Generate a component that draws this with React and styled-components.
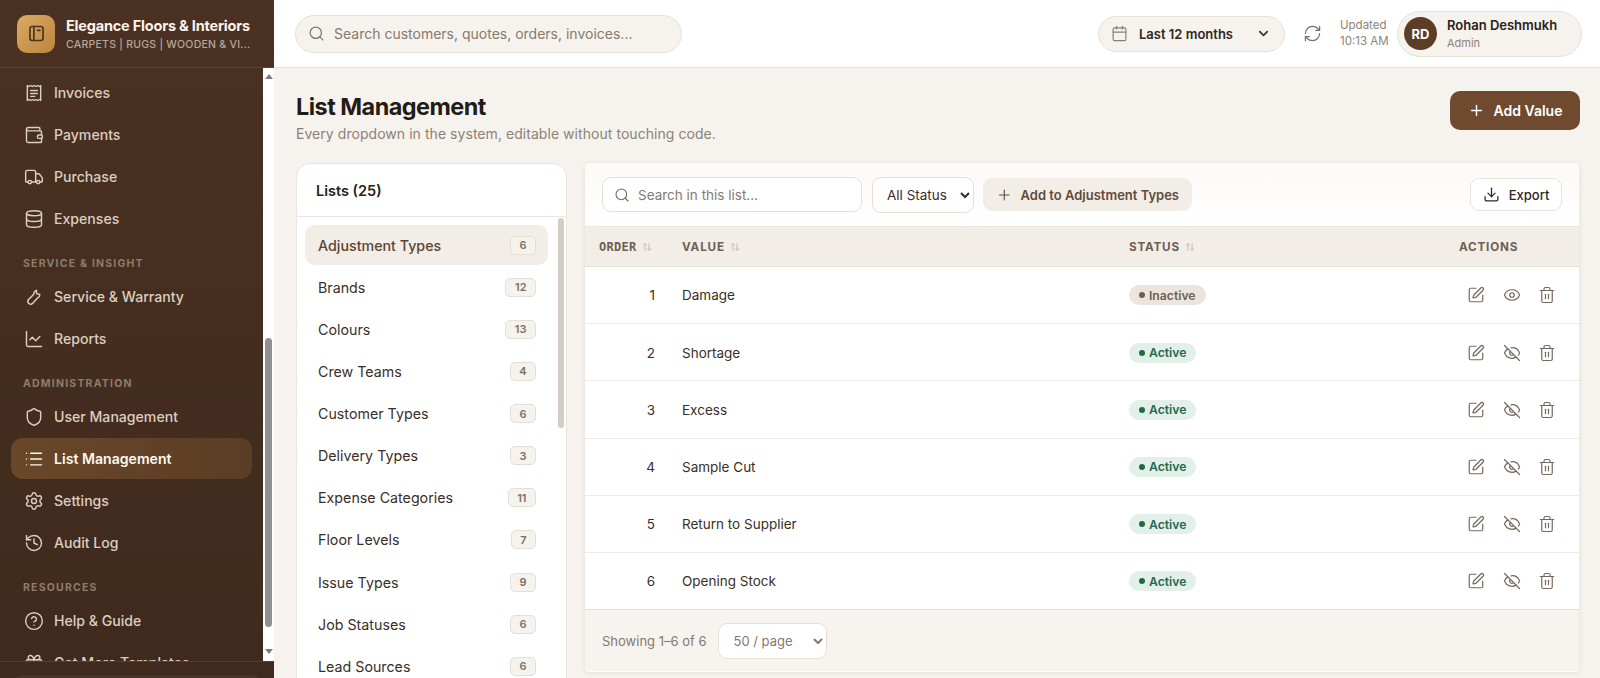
import React from 'react';
import styled, { createGlobalStyle } from 'styled-components';
import {
  Wallet, Truck, Database, ChartLine, Shield, List, Settings, History,
  CircleHelp, Gift, Search, Calendar, ChevronDown, RefreshCw, Plus, Download, SquarePen, Eye,
  EyeOff, Trash2, ArrowUpDown,
} from 'lucide-react';

const GlobalStyle = createGlobalStyle`
  html, body { margin: 0; padding: 0; height: 100%; overflow: hidden; }
  body { font-family: Inter, "Liberation Sans", sans-serif; background: #f6f3ee; color: #2a211b; }
  * { box-sizing: border-box; }
`;

const Glyph = ({ size = 20, strokeWidth = 1.7, children }) => (
  <svg
    width={size}
    height={size}
    viewBox="0 0 24 24"
    fill="none"
    stroke="currentColor"
    strokeWidth={strokeWidth}
    strokeLinecap="round"
    strokeLinejoin="round"
  >
    {children}
  </svg>
);

const InvoiceIcon = (props) => (
  <Glyph {...props}>
    <path d="M4 3l2 1.2L8 3l2 1.2L12 3l2 1.2L16 3l2 1.2L20 3v18l-2-1.2-2 1.2-2-1.2-2 1.2-2-1.2-2 1.2-2-1.2-2 1.2z" />
    <path d="M8 9h8M8 12.5h8M8 16h5" />
  </Glyph>
);

const ToolIcon = (props) => (
  <Glyph {...props}>
    <path d="M15 4v4l4 1c0 2-1 3.5-2.5 4l-6 6.5a3 3 0 0 1-5-4.500l6-6c0-2 1-4 3.500-5z" />
  </Glyph>
);

const BookIcon = (props) => (
  <Glyph {...props}>
    <rect x="4.500" y="4" width="15" height="16" rx="2.500" />
    <path d="M9 4v16M13 8.500h3" />
  </Glyph>
);

const navGroups = [
  { items: [[InvoiceIcon, 'Invoices'], [Wallet, 'Payments'], [Truck, 'Purchase'], [Database, 'Expenses']] },
  { title: 'SERVICE & INSIGHT', items: [[ToolIcon, 'Service & Warranty'], [ChartLine, 'Reports']] },
  { title: 'ADMINISTRATION', items: [[Shield, 'User Management'], [List, 'List Management'], [Settings, 'Settings'], [History, 'Audit Log']] },
  { title: 'RESOURCES', items: [[CircleHelp, 'Help & Guide'], [Gift, 'Get More Templates']] },
];

const lists = [
  ['Adjustment Types', 6], ['Brands', 12], ['Colours', 13], ['Crew Teams', 4], ['Customer Types', 6],
  ['Delivery Types', 3], ['Expense Categories', 11], ['Floor Levels', 7], ['Issue Types', 9],
  ['Job Statuses', 6], ['Lead Sources', 6],
];

const rows = [
  [1, 'Damage', false], [2, 'Shortage', true], [3, 'Excess', true],
  [4, 'Sample Cut', true], [5, 'Return to Supplier', true], [6, 'Opening Stock', true],
];

export default function App() {
  return (
    <Shell>
      <GlobalStyle />
      <Sidebar>
        <Brand>
          <LogoMark><BookIcon size={21} strokeWidth={1.9} /></LogoMark>
          <div>
            <BrandName>Elegance Floors &amp; Interiors</BrandName>
            <BrandTag>CARPETS | RUGS | WOODEN &amp; VI...</BrandTag>
          </div>
        </Brand>
        <NavArea>
          <NavList>
            {navGroups.map((group, i) => (
              <div key={i}>
                {group.title && <NavTitle>{group.title}</NavTitle>}
                {group.items.map(([Icon, label]) => (
                  <NavItem key={label} $active={label === 'List Management'}>
                    <Icon size={20} strokeWidth={1.7} />
                    {label}
                  </NavItem>
                ))}
              </div>
            ))}
          </NavList>
          <ScrollTrack>
            <ScrollArrow $up />
            <ScrollThumb />
            <ScrollArrow />
          </ScrollTrack>
        </NavArea>
        <SideFooter><FooterCard /></SideFooter>
      </Sidebar>

      <Main>
        <Topbar>
          <GlobalSearch>
            <Search size={17} strokeWidth={1.7} color="#7d7268" />
            <input placeholder="Search customers, quotes, orders, invoices..." />
          </GlobalSearch>
          <TopRight>
            <DatePill>
              <Calendar size={17} strokeWidth={1.6} color="#8a7d71" />
              <span>Last 12 months</span>
              <ChevronDown size={15} strokeWidth={2.6} color="#3a2e26" />
            </DatePill>
            <Refresh><RefreshCw size={19} strokeWidth={1.5} /></Refresh>
            <Updated>Updated<br />10:13 AM</Updated>
            <UserPill>
              <Avatar>RD</Avatar>
              <UserText>
                <UserName>Rohan Deshmukh</UserName>
                <UserRole>Admin</UserRole>
              </UserText>
            </UserPill>
          </TopRight>
        </Topbar>

        <Content>
          <PageHead>
            <div>
              <PageTitle>List Management</PageTitle>
              <PageSub>Every dropdown in the system, editable without touching code.</PageSub>
            </div>
            <AddButton><Plus size={17} strokeWidth={2} />Add Value</AddButton>
          </PageHead>

          <Columns>
            <ListsCard>
              <ListsHead>Lists (25)</ListsHead>
              <ListsBody>
                <ListsScroll>
                  {lists.map(([name, count], i) => (
                    <ListRow key={name} $active={i === 0}>
                      {name}
                      <Count>{count}</Count>
                    </ListRow>
                  ))}
                </ListsScroll>
                <ListsThumb />
              </ListsBody>
            </ListsCard>

            <TableCard>
              <Toolbar>
                <FilterSearch>
                  <Search size={16} strokeWidth={1.6} color="#6f655c" />
                  <input placeholder="Search in this list..." />
                </FilterSearch>
                <StatusSelect defaultValue="all">
                  <option value="all">All Status</option>
                </StatusSelect>
                <AddTo><Plus size={18} strokeWidth={1.6} />Add to Adjustment Types</AddTo>
                <ExportButton><Download size={17} strokeWidth={1.8} />Export</ExportButton>
              </Toolbar>

              <HeadRow>
                <OrderHead>ORDER <SortIcon size={10} /></OrderHead>
                <HeadCell>VALUE <SortIcon size={10} /></HeadCell>
                <HeadCell>STATUS <SortIcon size={10} /></HeadCell>
                <HeadCell>ACTIONS</HeadCell>
              </HeadRow>

              {rows.map(([order, value, active]) => (
                <Row key={order}>
                  <OrderCell>{order}</OrderCell>
                  <span>{value}</span>
                  <span>
                    <Badge $active={active}><Dot />{active ? 'Active' : 'Inactive'}</Badge>
                  </span>
                  <Actions>
                    <SquarePen size={18} strokeWidth={1.6} />
                    {active ? <EyeOff size={18} strokeWidth={1.6} /> : <Eye size={18} strokeWidth={1.6} />}
                    <Trash2 size={18} strokeWidth={1.6} />
                  </Actions>
                </Row>
              ))}

              <TableFooter>
                Showing 1–6 of 6
                <PageSelect defaultValue="50">
                  <option value="50">50 / page</option>
                </PageSelect>
              </TableFooter>
            </TableCard>
          </Columns>
        </Content>
      </Main>
    </Shell>
  );
}

const Shell = styled.div`
  display: flex;
  height: 678px;
  overflow: hidden;
`;

const Sidebar = styled.aside`
  width: 274px;
  flex: none;
  display: flex;
  flex-direction: column;
  background: linear-gradient(180deg, #4a3122 0%, #3f2a1d 100%);
`;

const Brand = styled.div`
  height: 68px;
  flex: none;
  display: flex;
  align-items: center;
  gap: 11px;
  padding: 0 17px;
  border-bottom: 1px solid rgba(255, 255, 255, 0.1);
`;

const LogoMark = styled.div`
  width: 38px;
  height: 38px;
  flex: none;
  display: flex;
  align-items: center;
  justify-content: center;
  border-radius: 10px;
  background: linear-gradient(135deg, #dcaa62, #bb863f);
  color: #4a3122;
`;

const BrandName = styled.div`
  font-size: 14.5px;
  font-weight: 700;
  letter-spacing: -0.2px;
  color: #fbf3e8;
  white-space: nowrap;
`;

const BrandTag = styled.div`
  margin-top: 4px;
  font-size: 10.5px;
  font-weight: 500;
  letter-spacing: 0.25px;
  color: #b8a796;
  white-space: nowrap;
`;

const NavArea = styled.div`
  flex: 1;
  min-height: 0;
  display: flex;
`;

const NavList = styled.nav`
  flex: 1;
  min-width: 0;
  overflow: hidden;
  padding: 4px 11px 0;
`;

const NavTitle = styled.div`
  height: 36px;
  padding: 17.5px 12px 0;
  font-size: 10.5px;
  line-height: 12px;
  font-weight: 700;
  letter-spacing: 1.2px;
  color: #8f7c6a;
`;

const NavItem = styled.div`
  height: 41px;
  margin-bottom: 1px;
  display: flex;
  align-items: center;
  gap: 10px;
  padding: 0 13px;
  border-radius: 12px;
  font-size: 14.1px;
  font-weight: ${(p) => (p.$active ? 600 : 500)};
  color: ${(p) => (p.$active ? '#fdf8f1' : '#dccfc0')};
  background: ${(p) => (p.$active ? 'linear-gradient(90deg, #6a4729, #5a3d26)' : 'transparent')};
  white-space: nowrap;
`;

const ScrollTrack = styled.div`
  width: 11px;
  flex: none;
  display: flex;
  flex-direction: column;
  background: #fff;
`;

const ScrollArrow = styled.div`
  height: 11px;
  margin: ${(p) => (p.$up ? '4px 0 0' : '0 0 3px')};
  flex: none;
  &::after {
    content: '';
    display: block;
    margin: 2px auto 0;
    width: 0;
    border-left: 4px solid transparent;
    border-right: 4px solid transparent;
    ${(p) => (p.$up ? 'border-bottom: 5px solid #7d7d7d;' : 'border-top: 5px solid #7d7d7d;')}
  }
`;

const ScrollThumb = styled.div`
  width: 7px;
  height: 289px;
  margin: 255px auto auto;
  border-radius: 4px;
  background: #8f9092;
`;

const SideFooter = styled.div`
  height: 17px;
  flex: none;
  padding: 13px 11px 0;
  border-top: 1px solid rgba(255, 255, 255, 0.1);
`;

const FooterCard = styled.div`
  height: 30px;
  border-radius: 12px;
  background: rgba(255, 255, 255, 0.05);
`;

const Main = styled.div`
  flex: 1;
  min-width: 0;
  display: flex;
  flex-direction: column;
`;

const Topbar = styled.header`
  height: 68px;
  flex: none;
  display: flex;
  align-items: center;
  justify-content: space-between;
  padding: 0 18px 0 21px;
  background: #fff;
  border-bottom: 1px solid #e9e3db;
`;

const GlobalSearch = styled.label`
  width: 387px;
  height: 38px;
  display: flex;
  align-items: center;
  gap: 7px;
  padding: 0 12px;
  border: 1px solid #e8e1d8;
  border-radius: 19px;
  background: #f6f2ed;
  input {
    flex: 1;
    min-width: 0;
    border: 0;
    outline: 0;
    background: transparent;
    font: 400 14px Inter, sans-serif;
  }
  input::placeholder { color: #857a70; opacity: 1; }
`;

const TopRight = styled.div`
  display: flex;
  align-items: center;
`;

const DatePill = styled.div`
  width: 187px;
  height: 36px;
  display: flex;
  align-items: center;
  gap: 11px;
  padding: 0 13px 0 12px;
  border: 1px solid #e8e1d8;
  border-radius: 18px;
  background: #f6f2ed;
  font-size: 13px;
  font-weight: 600;
  color: #2f261f;
  span { flex: 1; white-space: nowrap; }
`;

const Refresh = styled.div`
  display: flex;
  margin: 0 18px;
  color: #7b6f65;
`;

const Updated = styled.div`
  width: 57px;
  font-size: 11.5px;
  line-height: 15.5px;
  color: #8d8378;
`;

const UserPill = styled.div`
  width: 185px;
  height: 46px;
  display: flex;
  align-items: center;
  gap: 10px;
  padding: 0 6px;
  border: 1px solid #e8e1d8;
  border-radius: 23px;
  background: #f6f2ed;
`;

const UserText = styled.div`
  padding-bottom: 1px;
`;

const Avatar = styled.div`
  width: 33px;
  height: 33px;
  flex: none;
  display: flex;
  align-items: center;
  justify-content: center;
  border-radius: 50%;
  background: #5c3d26;
  color: #fff;
  font-size: 13px;
  font-weight: 700;
`;

const UserName = styled.div`
  font-size: 13px;
  font-weight: 600;
  color: #2a211b;
`;

const UserRole = styled.div`
  margin-top: 3px;
  font-size: 11px;
  color: #8d8378;
`;

const Content = styled.main`
  flex: 1;
  min-height: 0;
  overflow: hidden;
  padding: 23px 21px 0 22px;
`;

const PageHead = styled.div`
  display: flex;
  justify-content: space-between;
  align-items: flex-start;
  height: 72px;
`;

const PageTitle = styled.h1`
  margin: 0;
  font-size: 23.4px;
  line-height: 32px;
  font-weight: 700;
  letter-spacing: -0.5px;
  color: #241b15;
`;

const PageSub = styled.p`
  margin: 1px 0 0;
  font-size: 14px;
  line-height: 20px;
  letter-spacing: 0.05px;
  color: #8c8175;
`;

const AddButton = styled.button`
  width: 130px;
  height: 39px;
  margin-right: -1px;
  display: flex;
  align-items: center;
  justify-content: center;
  gap: 9px;
  border: 0;
  border-radius: 10px;
  background: #6f4a2f;
  color: #fff;
  font: 600 14px Inter, sans-serif;
`;

const Columns = styled.div`
  display: flex;
  align-items: flex-start;
  gap: 18px;
`;

const ListsCard = styled.section`
  width: 271px;
  flex: none;
  height: 560px;
  background: #fff;
  border: 1px solid #ebe5dd;
  border-radius: 14px;
  overflow: hidden;
`;

const ListsHead = styled.div`
  height: 53px;
  padding: 0 19px;
  display: flex;
  align-items: center;
  border-bottom: 1px solid #ebe5dd;
  font-size: 14.5px;
  font-weight: 600;
  color: #2a211b;
`;

const ListsBody = styled.div`
  display: flex;
  padding-right: 2px;
`;

const ListsScroll = styled.div`
  flex: 1;
  min-width: 0;
  padding: 8px 10px 0 8px;
`;

const ListsThumb = styled.div`
  width: 6px;
  height: 210px;
  margin-top: 1px;
  flex: none;
  border-radius: 3px;
  background: #d5cdc3;
`;

const ListRow = styled.div`
  height: 40px;
  margin-bottom: 2.15px;
  display: flex;
  align-items: center;
  justify-content: space-between;
  padding: 0 12px 0 13px;
  border-radius: 10px;
  background: ${(p) => (p.$active ? '#f2ede7' : 'transparent')};
  font-size: 14.25px;
  font-weight: ${(p) => (p.$active ? 500 : 400)};
  color: ${(p) => (p.$active ? '#5a4535' : '#3a2f27')};
`;

const Count = styled.span`
  min-width: 25px;
  height: 19px;
  padding: 0 8.5px;
  display: flex;
  align-items: center;
  justify-content: center;
  border: 1px solid #e6dfd6;
  border-radius: 5px;
  background: #f6f2ed;
  font-size: 11px;
  font-weight: 600;
  color: #7d7063;
`;

const TableCard = styled.section`
  flex: 1;
  min-width: 0;
  height: 509px;
  background: #fff;
  border-radius: 4px;
  box-shadow: 0 1px 5px rgba(60, 40, 20, 0.1);
  overflow: hidden;
`;

const Toolbar = styled.div`
  height: 64px;
  display: flex;
  align-items: center;
  gap: 10px;
  padding: 0 17px;
  background: linear-gradient(180deg, #fdfaf6, #fff);
  border-bottom: 1px solid #ece6de;
`;

const FilterSearch = styled.label`
  width: 260px;
  height: 35px;
  display: flex;
  align-items: center;
  gap: 6px;
  padding: 0 11px;
  border: 1px solid #e6dfd6;
  border-radius: 9px;
  background: #fff;
  input {
    flex: 1;
    min-width: 0;
    border: 0;
    outline: 0;
    background: transparent;
    font: 400 13.5px Inter, sans-serif;
  }
  input::placeholder { color: #857a70; opacity: 1; }
`;

const StatusSelect = styled.select`
  width: 102px;
  height: 36px;
  padding: 0 0 0 10px;
  border: 1px solid #e6dfd6;
  border-radius: 9px;
  background: #fff;
  font: 400 13.5px Inter, sans-serif;
  color: #3a2f27;
`;

const AddTo = styled.button`
  width: 209px;
  height: 33px;
  margin-left: -1px;
  display: flex;
  align-items: center;
  gap: 8px;
  padding: 0 13px;
  border: 0;
  border-radius: 9px;
  background: #f2ede7;
  color: #5f4a39;
  font: 600 13px Inter, sans-serif;
  white-space: nowrap;
`;

const ExportButton = styled.button`
  width: 92px;
  height: 33px;
  margin-left: auto;
  display: flex;
  align-items: center;
  justify-content: center;
  gap: 9px;
  border: 1px solid #e9e3db;
  border-radius: 9px;
  background: #fff;
  color: #2f261f;
  font: 500 13px Inter, sans-serif;
`;

const gridColumns = '97px 447px 330px 1fr';

const HeadRow = styled.div`
  height: 40px;
  display: grid;
  grid-template-columns: ${gridColumns};
  align-items: center;
  background: #f2ede6;
  border-bottom: 1px solid #e8e1d8;
`;

const HeadCell = styled.div`
  display: flex;
  align-items: center;
  gap: 5px;
  font-size: 11.7px;
  font-weight: 700;
  letter-spacing: 0.8px;
  color: #6d5f53;
`;

const OrderHead = styled(HeadCell)`
  padding-left: 14px;
  font-family: "DejaVu Sans Mono", monospace;
  font-size: 12px;
  letter-spacing: 0.3px;
`;

const SortIcon = styled(ArrowUpDown)`
  color: #bdb3a8;
  stroke-width: 2;
`;

const Row = styled.div`
  height: 57.2px;
  padding-top: 0.5px;
  display: grid;
  grid-template-columns: ${gridColumns};
  align-items: center;
  border-bottom: 1px solid #efeae3;
  font-size: 13.5px;
  color: #3a2f27;
  &:nth-last-child(2) { border-bottom-color: #e5dfd6; }
`;

const OrderCell = styled.span`
  padding-right: 27px;
  text-align: right;
`;

const Badge = styled.span`
  display: inline-flex;
  align-items: center;
  gap: 4px;
  height: 20px;
  padding: 0 10px;
  border-radius: 10px;
  background: ${(p) => (p.$active ? '#e3efe9' : '#ece5de')};
  color: ${(p) => (p.$active ? '#1f6a4d' : '#6d5f53')};
  font-size: 12.2px;
  font-weight: 600;
`;

const Dot = styled.i`
  width: 6px;
  height: 6px;
  border-radius: 50%;
  background: currentColor;
`;

const Actions = styled.span`
  display: flex;
  justify-content: flex-end;
  gap: 17.5px;
  padding-right: 23px;
  color: #75695e;
`;

const TableFooter = styled.div`
  height: 61px;
  display: flex;
  align-items: center;
  gap: 11px;
  padding: 1px 17px 0;
  background: #f7f4f0;
  font-size: 13px;
  color: #85796e;
`;

const PageSelect = styled.select`
  width: 109px;
  height: 36px;
  padding: 0 0 0 11px;
  border: 1px solid #e6dfd6;
  border-radius: 9px;
  background: #fff;
  font: 400 13px Inter, sans-serif;
  color: #85796e;
`;
